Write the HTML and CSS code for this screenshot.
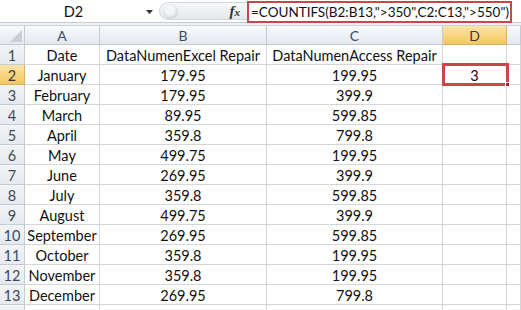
FILE: index.html
```html
<!DOCTYPE html>
<html>
<head>
<meta charset="utf-8">
<link rel="stylesheet" href="styles.css">
</head>
<body>
<div class="fbar">
  <div class="namebox">D2</div>
  <div class="dd"><svg width="9" height="6" viewBox="0 0 9 6"><path d="M1 1h7L4.5 5z" fill="#333"/></svg></div>
  <div class="pill"><span class="knob"></span><span class="fx">f<span class="x">x</span></span></div>
  <div class="formula">=COUNTIFS(B2:B13,"&gt;350",C2:C13,"&gt;550")</div>
  <div class="rest"></div>
</div>
<div class="strip"></div>
<div class="grid">
  <div class="hd corner"><svg width="12" height="12" viewBox="0 0 12 12"><path d="M12 0V12H0z" fill="#c9ced6"/></svg></div>
  <div class="hd">A</div><div class="hd">B</div><div class="hd">C</div><div class="hd act">D</div><div class="hd"></div>

  <div class="rh">1</div><div class="c">Date</div><div class="c">DataNumenExcel Repair</div><div class="c">DataNumenAccess Repair</div><div class="c"></div><div class="c"></div>
  <div class="rh act">2</div><div class="c">January</div><div class="c">179.95</div><div class="c">199.95</div><div class="c sel">3<span class="handle"></span></div><div class="c"></div>
  <div class="rh">3</div><div class="c">February</div><div class="c">179.95</div><div class="c">399.9</div><div class="c"></div><div class="c"></div>
  <div class="rh">4</div><div class="c">March</div><div class="c">89.95</div><div class="c">599.85</div><div class="c"></div><div class="c"></div>
  <div class="rh">5</div><div class="c">April</div><div class="c">359.8</div><div class="c">799.8</div><div class="c"></div><div class="c"></div>
  <div class="rh">6</div><div class="c">May</div><div class="c">499.75</div><div class="c">199.95</div><div class="c"></div><div class="c"></div>
  <div class="rh">7</div><div class="c">June</div><div class="c">269.95</div><div class="c">399.9</div><div class="c"></div><div class="c"></div>
  <div class="rh">8</div><div class="c">July</div><div class="c">359.8</div><div class="c">599.85</div><div class="c"></div><div class="c"></div>
  <div class="rh">9</div><div class="c">August</div><div class="c">499.75</div><div class="c">399.9</div><div class="c"></div><div class="c"></div>
  <div class="rh">10</div><div class="c">September</div><div class="c">269.95</div><div class="c">599.85</div><div class="c"></div><div class="c"></div>
  <div class="rh">11</div><div class="c">October</div><div class="c">359.8</div><div class="c">199.95</div><div class="c"></div><div class="c"></div>
  <div class="rh">12</div><div class="c">November</div><div class="c">359.8</div><div class="c">199.95</div><div class="c"></div><div class="c"></div>
  <div class="rh">13</div><div class="c">December</div><div class="c">269.95</div><div class="c">799.8</div><div class="c"></div><div class="c"></div>
  <div class="rh"></div><div class="c"></div><div class="c"></div><div class="c"></div><div class="c"></div><div class="c"></div>
</div>
</body>
</html>
```

FILE: styles.css
```css
* { box-sizing: border-box; }
html, body { margin: 0; padding: 0; background: #fff; overflow: hidden; }
body { width: 521px; height: 310px; font-family: Lato, "Open Sans", sans-serif; color: #111; }

.fbar { display: flex; height: 23px; align-items: stretch; background: #fff; border-bottom: 1px solid #c6ccd4; }
.namebox { width: 145px; display: flex; align-items: center; justify-content: center; font-size: 14.5px; padding-top: 1px; padding-left: 2px; }
.dd { width: 14px; display: flex; align-items: center; justify-content: flex-start; padding-top: 2px; }
.pill { width: 88px; margin: 2px 0 2px 0; border: 1px solid #d2d6dc; border-right: none; border-radius: 10px 0 0 10px; background: linear-gradient(#f7f8fa, #e4e7eb); display: flex; align-items: center; justify-content: space-between; padding: 0 7px 0 3px; }
.knob { width: 15px; height: 15px; border-radius: 50%; background: radial-gradient(circle at 45% 40%, #f4f5f7 35%, #cdd1d6 75%, #e8eaed 100%); }
.fx { font-family: "Liberation Serif", serif; font-style: italic; font-weight: bold; font-size: 15px; color: #333; }
.fx .x { font-size: 11px; }
.formula { width: 265px; margin-top: 1px; margin-bottom: -1px; border: 2px solid #c9474a; display: flex; align-items: center; padding-left: 2px; font-size: 13.5px; white-space: nowrap; overflow: hidden; background: #fff; }
.rest { flex: 1; }

.strip { height: 3px; background: #eef0f3; border-bottom: 1px solid #cfd4db; }

.grid { display: grid; grid-template-columns: 25px 75px 167px 176px 64px 1fr; grid-template-rows: 19px repeat(14, 20px); }
.grid > div { border-right: 1px solid #d6d6d6; border-bottom: 1px solid #d6d6d6; display: flex; align-items: center; justify-content: center; font-size: 14.5px; white-space: nowrap; padding-top: 2px; }
.hd { background: linear-gradient(#f7f9fc, #e4e8ee); color: #3b4b5e; border-color: #c5cbd3 !important; font-size: 14px !important; padding-top: 1px !important; }
.corner { justify-content: flex-end !important; align-items: flex-end !important; padding: 0 2px 2px 0 !important; }
.rh { background: linear-gradient(#f2f4f7, #e6e9ee); color: #3b4b5e; border-color: #c5cbd3 !important; font-size: 14.5px !important; }
.hd.act, .rh.act { background: linear-gradient(#fbe4a8, #f3c760); color: #3a3a30; border-color: #d8b160 !important; }

.sel { position: relative; }
.sel::after { content: ""; position: absolute; left: -1px; top: -2px; right: -3px; bottom: -2px; border: 3px solid #c9474a; }
.handle { position: absolute; right: -4px; bottom: -3px; width: 5px; height: 5px; background: #8a2b2d; border: 1px solid #fff; z-index: 2; }
```
